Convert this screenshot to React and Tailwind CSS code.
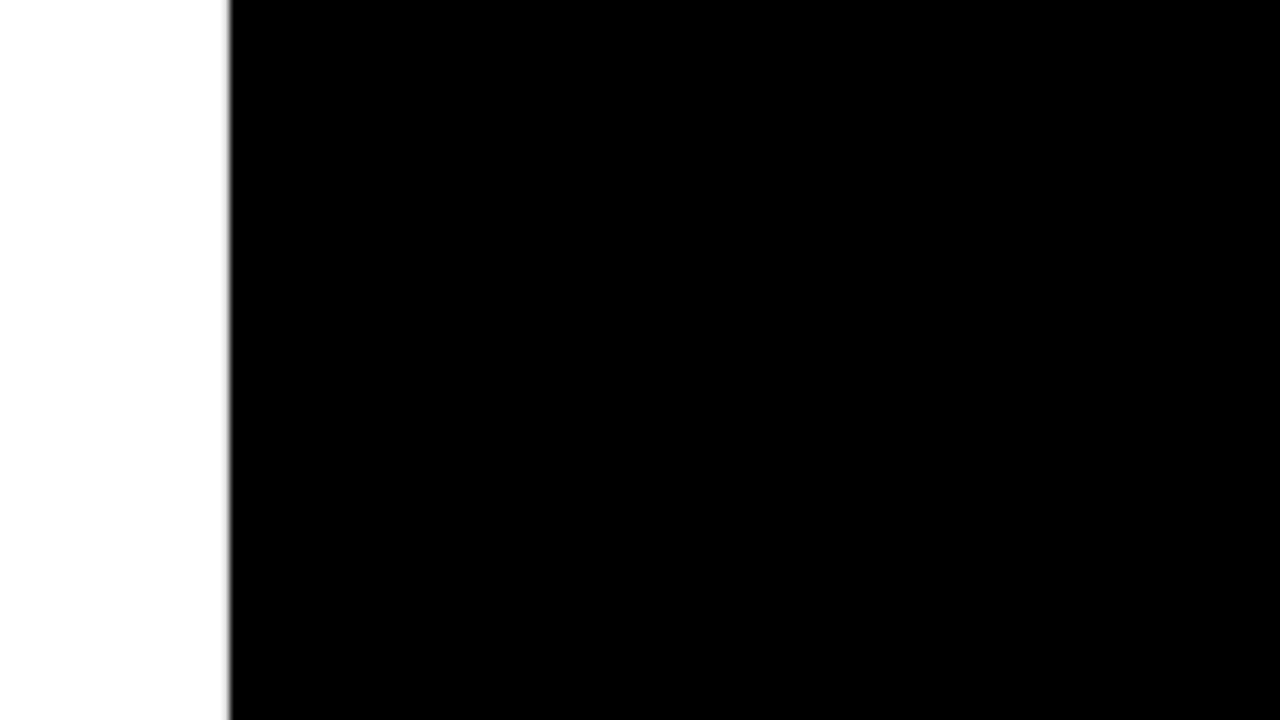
import React from 'react';

const App = () => {
    return (
        <div className="flex h-screen w-full overflow-hidden">
            <aside className="w-[220px] shrink-0 bg-white" />
            <div className="w-[14px] shrink-0 bg-[linear-gradient(to_right,#ffffff_0%,#e6e6e6_40%,#a0a0a0_60%,#404040_80%,#000000_100%)]" />
            <main className="flex-1 bg-black" />
        </div>
    );
};

export default App;
